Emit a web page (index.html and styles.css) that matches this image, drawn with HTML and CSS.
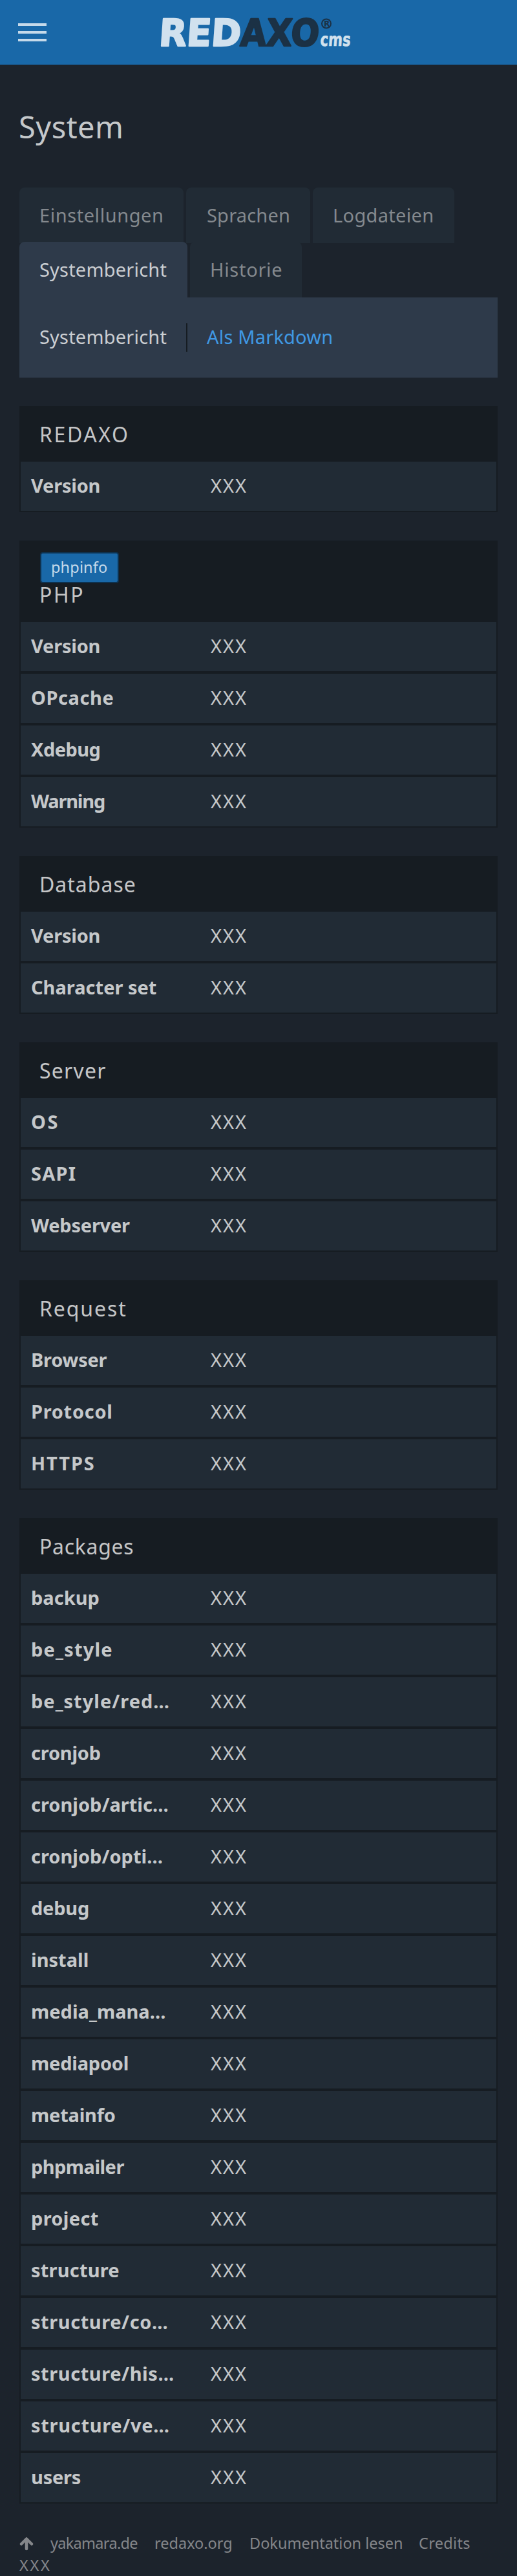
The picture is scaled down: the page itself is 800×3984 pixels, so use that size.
FILE: index.html
```
<!DOCTYPE html>
<html lang="de">
<head>
<meta charset="utf-8">
<title>System</title>
<link rel="stylesheet" href="styles.css">
</head>
<body>
<header class="navbar">
  <button class="burger" aria-label="Menü"><span></span><span></span><span></span></button>
  <svg class="logo" width="296" height="48" viewBox="0 0 296 48" role="img" aria-label="REDAXO cms">
    <g transform="translate(1 45) skewX(-4)">
      <text class="logo-light" x="-4" y="0" textLength="127" lengthAdjust="spacingAndGlyphs">RED</text>
      <text class="logo-dark" x="122" y="0" textLength="122" lengthAdjust="spacingAndGlyphs">AXO</text>
      <text class="logo-cms" x="246" y="0" textLength="47" lengthAdjust="spacingAndGlyphs">cms</text>
    </g>
    <circle class="logo-ring" cx="257" cy="10.5" r="7"/>
    <text class="logo-reg" x="253" y="15">R</text>
  </svg>
</header>
<main class="page">
  <h1 class="page-title">System</h1>
  <nav class="tabs">
    <div class="tab-row">
      <a class="tab w-einst k5">Einstellungen</a>
      <a class="tab w-spra k2">Sprachen</a>
      <a class="tab w-log k3">Logdateien</a>
    </div>
    <div class="tab-row tab-row-second">
      <a class="tab active w-bericht k2">Systembericht</a>
      <a class="tab w-hist k7">Historie</a>
    </div>
  </nav>
  <nav class="subnav">
    <a class="sub current k2">Systembericht</a>
    <a class="sub k2">Als Markdown</a>
  </nav>

  <section class="panel">
    <h2 class="panel-head k26">REDAXO</h2>
    <dl class="rows">
      <div class="row"><dt class="n2">Version</dt><dd>XXX</dd></div>
    </dl>
  </section>

  <section class="panel">
    <div class="panel-head with-button"><a class="btn">phpinfo</a><h2 class="k26">PHP</h2></div>
    <dl class="rows">
      <div class="row"><dt class="n2">Version</dt><dd>XXX</dd></div>
      <div class="row"><dt class="k5">OPcache</dt><dd>XXX</dd></div>
      <div class="row"><dt class="n5">Xdebug</dt><dd>XXX</dd></div>
      <div class="row"><dt class="n12">Warning</dt><dd>XXX</dd></div>
    </dl>
  </section>

  <section class="panel">
    <h2 class="panel-head k10">Database</h2>
    <dl class="rows">
      <div class="row"><dt class="n2">Version</dt><dd>XXX</dd></div>
      <div class="row"><dt>Character set</dt><dd>XXX</dd></div>
    </dl>
  </section>

  <section class="panel">
    <h2 class="panel-head k12">Server</h2>
    <dl class="rows">
      <div class="row"><dt class="k26">OS</dt><dd>XXX</dd></div>
      <div class="row"><dt class="k12">SAPI</dt><dd>XXX</dd></div>
      <div class="row"><dt class="n2">Webserver</dt><dd>XXX</dd></div>
    </dl>
  </section>

  <section class="panel">
    <h2 class="panel-head k19">Request</h2>
    <dl class="rows">
      <div class="row"><dt class="n2">Browser</dt><dd>XXX</dd></div>
      <div class="row"><dt class="k7">Protocol</dt><dd>XXX</dd></div>
      <div class="row"><dt class="k19">HTTPS</dt><dd>XXX</dd></div>
    </dl>
  </section>

  <section class="panel">
    <h2 class="panel-head k7">Packages</h2>
    <dl class="rows">
      <div class="row"><dt>backup</dt><dd>XXX</dd></div>
      <div class="row"><dt class="k12">be_style</dt><dd>XXX</dd></div>
      <div class="row"><dt class="k10">be_style/red…</dt><dd>XXX</dd></div>
      <div class="row"><dt class="n2">cronjob</dt><dd>XXX</dd></div>
      <div class="row"><dt>cronjob/artic…</dt><dd>XXX</dd></div>
      <div class="row"><dt>cronjob/opti…</dt><dd>XXX</dd></div>
      <div class="row"><dt class="n2">debug</dt><dd>XXX</dd></div>
      <div class="row"><dt>install</dt><dd>XXX</dd></div>
      <div class="row"><dt>media_mana…</dt><dd>XXX</dd></div>
      <div class="row"><dt class="n2">mediapool</dt><dd>XXX</dd></div>
      <div class="row"><dt class="n2">metainfo</dt><dd>XXX</dd></div>
      <div class="row"><dt class="n5">phpmailer</dt><dd>XXX</dd></div>
      <div class="row"><dt class="k3">project</dt><dd>XXX</dd></div>
      <div class="row"><dt class="k2">structure</dt><dd>XXX</dd></div>
      <div class="row"><dt class="k5">structure/co…</dt><dd>XXX</dd></div>
      <div class="row"><dt class="k5">structure/his…</dt><dd>XXX</dd></div>
      <div class="row"><dt class="k7">structure/ve…</dt><dd>XXX</dd></div>
      <div class="row"><dt class="n2">users</dt><dd>XXX</dd></div>
    </dl>
  </section>
</main>
<footer class="footer">
  <div class="links">
    <a class="l-up"><svg class="arrow" width="22" height="22" viewBox="0 0 22 22"><path d="M11 19V4M3 11.5L11 3.5L19 11.5"/></svg></a>
    <a class="l-yak n7">yakamara.de</a>
    <a class="l-red">redaxo.org</a>
    <a class="l-dok">Dokumentation lesen</a>
    <a class="k3">Credits</a>
  </div>
  <div class="version">XXX</div>
</footer>
</body>
</html>
```
FILE: styles.css
```
* { box-sizing: border-box; }
body {
  margin: 0;
  background: #1c232c;
  color: #c5c8ca;
  font: 29px/42px "Noto Sans", "Open Sans", sans-serif;
}
h1, h2, dl, dt, dd { margin: 0; font-weight: normal; }

/* Navbar */
.navbar {
  height: 100px;
  background: #1968a8;
  display: flex;
  align-items: flex-start;
  padding: 26px 28px 0;
}
.burger {
  width: 44px;
  margin: 10px 176px 0 0;
  padding: 0;
  border: 0;
  background: none;
  display: flex;
  flex-direction: column;
  gap: 8px;
}
.burger span { height: 4px; background: #c6daea; }
.logo { display: block; overflow: visible; }
.logo text { font-family: "DejaVu Sans", sans-serif; font-weight: bold; }
.logo-light, .logo-dark { font-size: 57.5px; stroke-width: 2.5px; stroke-linejoin: round; }
.logo-light { fill: #d1e1ee; stroke: #d1e1ee; }
.logo-dark { fill: #1b3145; stroke: #1b3145; }
.logo-cms { font-size: 28px; fill: #d1e1ee; stroke: #d1e1ee; stroke-width: .6px; }
.logo .logo-reg { font-size: 12px; fill: #1b3145; }
.logo-ring { fill: none; stroke: #1b3145; stroke-width: 2px; }

/* Page */
.page { padding: 66px 30px 0; }
.page-title {
  font-size: 47px;
  line-height: 60px;
  letter-spacing: .45px;
  margin: 0 0 64px -1px;
}
.tab-row { display: flex; gap: 4px; }
.tab-row-second { margin-top: -2px; }
.tab {
  height: 86px;
  padding-left: 31px;
  line-height: 86px;
  color: #84898e;
  background: #212b35;
  border-radius: 8px 8px 0 0;
  white-space: nowrap;
}
.tab.active { background: #2e3a4a; color: #cbced2; position: relative; }
.w-einst { width: 254px; }
.w-spra { width: 192px; padding-left: 32px; }
.w-log { width: 219px; }
.w-bericht { width: 260px; }
.w-hist { width: 173px; }
.subnav {
  height: 124px;
  padding: 40px 0;
  background: #2e3a4a;
  display: flex;
}
.sub { height: 44px; padding: 0 30px; color: #4099e4; }
.sub.current { width: 260px; padding: 0 0 0 31px; color: #cbced2; border-right: 2px solid #161c22; }

/* Panels */
.panel { margin-top: 44px; background: #161c22; padding-bottom: 2px; }
.panel-head { height: 86px; padding-left: 31px; font-size: 32px; line-height: 87px; color: #c5c6c7; }
.with-button { height: 126px; padding: 18px 0 0 32px; }
.with-button h2 { font-size: 32px; line-height: 35px; margin-left: -1px; }
.btn {
  display: block;
  width: 122px;
  height: 48px;
  border: 2px solid #0e314e;
  border-radius: 4px;
  background: #1968a8;
  color: #c6daea;
  font-size: 23.5px;
  line-height: 43px;
  letter-spacing: .15px;
  padding-left: 15px;
}
.rows { margin: 0 2px; display: flex; flex-direction: column; gap: 4px; }
.row {
  display: grid;
  grid-template-columns: 278px 1fr;
  height: 76px;
  padding-left: 16px;
  background: #212b35;
  line-height: 73px;
}
.row dt { font-weight: bold; white-space: nowrap; }
.row dd { letter-spacing: 2px; }

/* Footer */
.footer {
  padding: 44px 30px 0;
  color: #84868a;
  font-size: 23.5px;
  line-height: 34px;
}
.links { display: flex; height: 34px; white-space: nowrap; }
.l-up { width: 48px; }
.l-yak { width: 161px; }
.l-red { width: 147px; }
.l-dok { width: 262px; }
.arrow { display: block; margin-top: 7px; fill: none; stroke: #84868a; stroke-width: 4.5px; stroke-linecap: round; stroke-linejoin: round; }
.version { letter-spacing: 2.7px; }

/* Tracking steps */
.n12 { letter-spacing: -1.2px; }
.n7 { letter-spacing: -.7px; }
.n5 { letter-spacing: -.55px; }
.n2 { letter-spacing: -.22px; }
.k2 { letter-spacing: .2px; }
.k3 { letter-spacing: .32px; }
.k5 { letter-spacing: .56px; }
.k7 { letter-spacing: .7px; }
.k10 { letter-spacing: 1px; }
.k12 { letter-spacing: 1.2px; }
.k19 { letter-spacing: 1.9px; }
.k26 { letter-spacing: 2.6px; }
```
